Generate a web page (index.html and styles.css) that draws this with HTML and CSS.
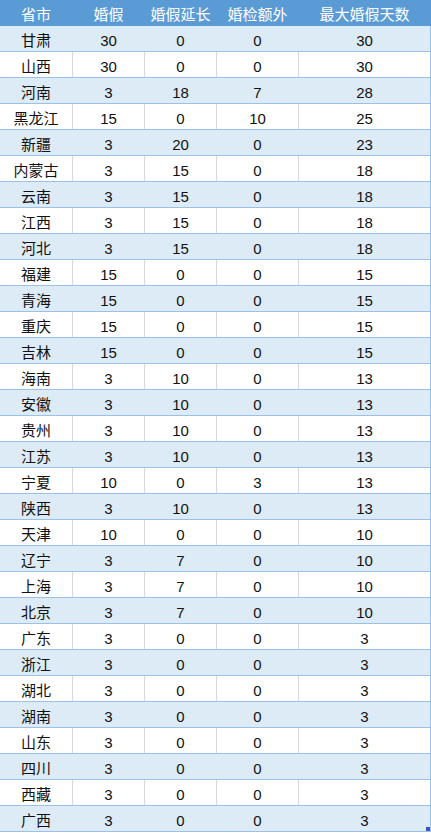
FILE: index.html
```html
<!DOCTYPE html>
<html lang="zh">
<head>
<meta charset="utf-8">
<title>婚假天数</title>
<link rel="stylesheet" href="styles.css">
</head>
<body>
<div class="sheet">
  <div class="row head"><div class="c">省市</div><div class="c">婚假</div><div class="c">婚假延长</div><div class="c">婚检额外</div><div class="c">最大婚假天数</div></div>
  <div class="row band"><div class="c">甘肃</div><div class="c">30</div><div class="c">0</div><div class="c">0</div><div class="c">30</div></div>
  <div class="row"><div class="c">山西</div><div class="c">30</div><div class="c">0</div><div class="c">0</div><div class="c">30</div></div>
  <div class="row band"><div class="c">河南</div><div class="c">3</div><div class="c">18</div><div class="c">7</div><div class="c">28</div></div>
  <div class="row"><div class="c">黑龙江</div><div class="c">15</div><div class="c">0</div><div class="c">10</div><div class="c">25</div></div>
  <div class="row band"><div class="c">新疆</div><div class="c">3</div><div class="c">20</div><div class="c">0</div><div class="c">23</div></div>
  <div class="row"><div class="c">内蒙古</div><div class="c">3</div><div class="c">15</div><div class="c">0</div><div class="c">18</div></div>
  <div class="row band"><div class="c">云南</div><div class="c">3</div><div class="c">15</div><div class="c">0</div><div class="c">18</div></div>
  <div class="row"><div class="c">江西</div><div class="c">3</div><div class="c">15</div><div class="c">0</div><div class="c">18</div></div>
  <div class="row band"><div class="c">河北</div><div class="c">3</div><div class="c">15</div><div class="c">0</div><div class="c">18</div></div>
  <div class="row"><div class="c">福建</div><div class="c">15</div><div class="c">0</div><div class="c">0</div><div class="c">15</div></div>
  <div class="row band"><div class="c">青海</div><div class="c">15</div><div class="c">0</div><div class="c">0</div><div class="c">15</div></div>
  <div class="row"><div class="c">重庆</div><div class="c">15</div><div class="c">0</div><div class="c">0</div><div class="c">15</div></div>
  <div class="row band"><div class="c">吉林</div><div class="c">15</div><div class="c">0</div><div class="c">0</div><div class="c">15</div></div>
  <div class="row"><div class="c">海南</div><div class="c">3</div><div class="c">10</div><div class="c">0</div><div class="c">13</div></div>
  <div class="row band"><div class="c">安徽</div><div class="c">3</div><div class="c">10</div><div class="c">0</div><div class="c">13</div></div>
  <div class="row"><div class="c">贵州</div><div class="c">3</div><div class="c">10</div><div class="c">0</div><div class="c">13</div></div>
  <div class="row band"><div class="c">江苏</div><div class="c">3</div><div class="c">10</div><div class="c">0</div><div class="c">13</div></div>
  <div class="row"><div class="c">宁夏</div><div class="c">10</div><div class="c">0</div><div class="c">3</div><div class="c">13</div></div>
  <div class="row band"><div class="c">陕西</div><div class="c">3</div><div class="c">10</div><div class="c">0</div><div class="c">13</div></div>
  <div class="row"><div class="c">天津</div><div class="c">10</div><div class="c">0</div><div class="c">0</div><div class="c">10</div></div>
  <div class="row band"><div class="c">辽宁</div><div class="c">3</div><div class="c">7</div><div class="c">0</div><div class="c">10</div></div>
  <div class="row"><div class="c">上海</div><div class="c">3</div><div class="c">7</div><div class="c">0</div><div class="c">10</div></div>
  <div class="row band"><div class="c">北京</div><div class="c">3</div><div class="c">7</div><div class="c">0</div><div class="c">10</div></div>
  <div class="row"><div class="c">广东</div><div class="c">3</div><div class="c">0</div><div class="c">0</div><div class="c">3</div></div>
  <div class="row band"><div class="c">浙江</div><div class="c">3</div><div class="c">0</div><div class="c">0</div><div class="c">3</div></div>
  <div class="row"><div class="c">湖北</div><div class="c">3</div><div class="c">0</div><div class="c">0</div><div class="c">3</div></div>
  <div class="row band"><div class="c">湖南</div><div class="c">3</div><div class="c">0</div><div class="c">0</div><div class="c">3</div></div>
  <div class="row"><div class="c">山东</div><div class="c">3</div><div class="c">0</div><div class="c">0</div><div class="c">3</div></div>
  <div class="row band"><div class="c">四川</div><div class="c">3</div><div class="c">0</div><div class="c">0</div><div class="c">3</div></div>
  <div class="row"><div class="c">西藏</div><div class="c">3</div><div class="c">0</div><div class="c">0</div><div class="c">3</div></div>
  <div class="row band"><div class="c">广西</div><div class="c">3</div><div class="c">0</div><div class="c">0</div><div class="c">3</div></div>
  <div class="handle"></div>
</div>
</body>
</html>
```
FILE: styles.css
```css
html, body {
  margin: 0;
  padding: 0;
  background: #ffffff;
}

.sheet {
  position: relative;
  width: 431px;
  font-family: "Liberation Sans", "Noto Sans CJK SC", sans-serif;
  font-size: 15px;
  color: #111111;
}

.row {
  display: grid;
  grid-template-columns: 73px 72px 72px 82px 131px;
  height: 26px;
  box-sizing: border-box;
  border-bottom: 1px solid #9bc2e6;
  border-right: 1px solid #9bc2e6;
  background: #ffffff;
}

.row .c {
  display: flex;
  align-items: center;
  justify-content: center;
  padding-top: 3px;
  box-sizing: border-box;
  border-right: 1px solid #d9d9d9;
  line-height: 1;
  white-space: nowrap;
}

.row .c:last-child {
  border-right: none;
}

.row.band {
  background: #ddebf7;
}

.row.band .c {
  border-right-color: #ddebf7;
}

.row.head {
  background: #5b9bd5;
  color: #ffffff;
  border-bottom: none;
  border-right-color: #5b9bd5;
}

.row.head .c {
  border-right-color: #5b9bd5;
}

.handle {
  position: absolute;
  right: 1px;
  bottom: 1px;
  width: 4px;
  height: 4px;
  background: #3b55c4;
}
```
